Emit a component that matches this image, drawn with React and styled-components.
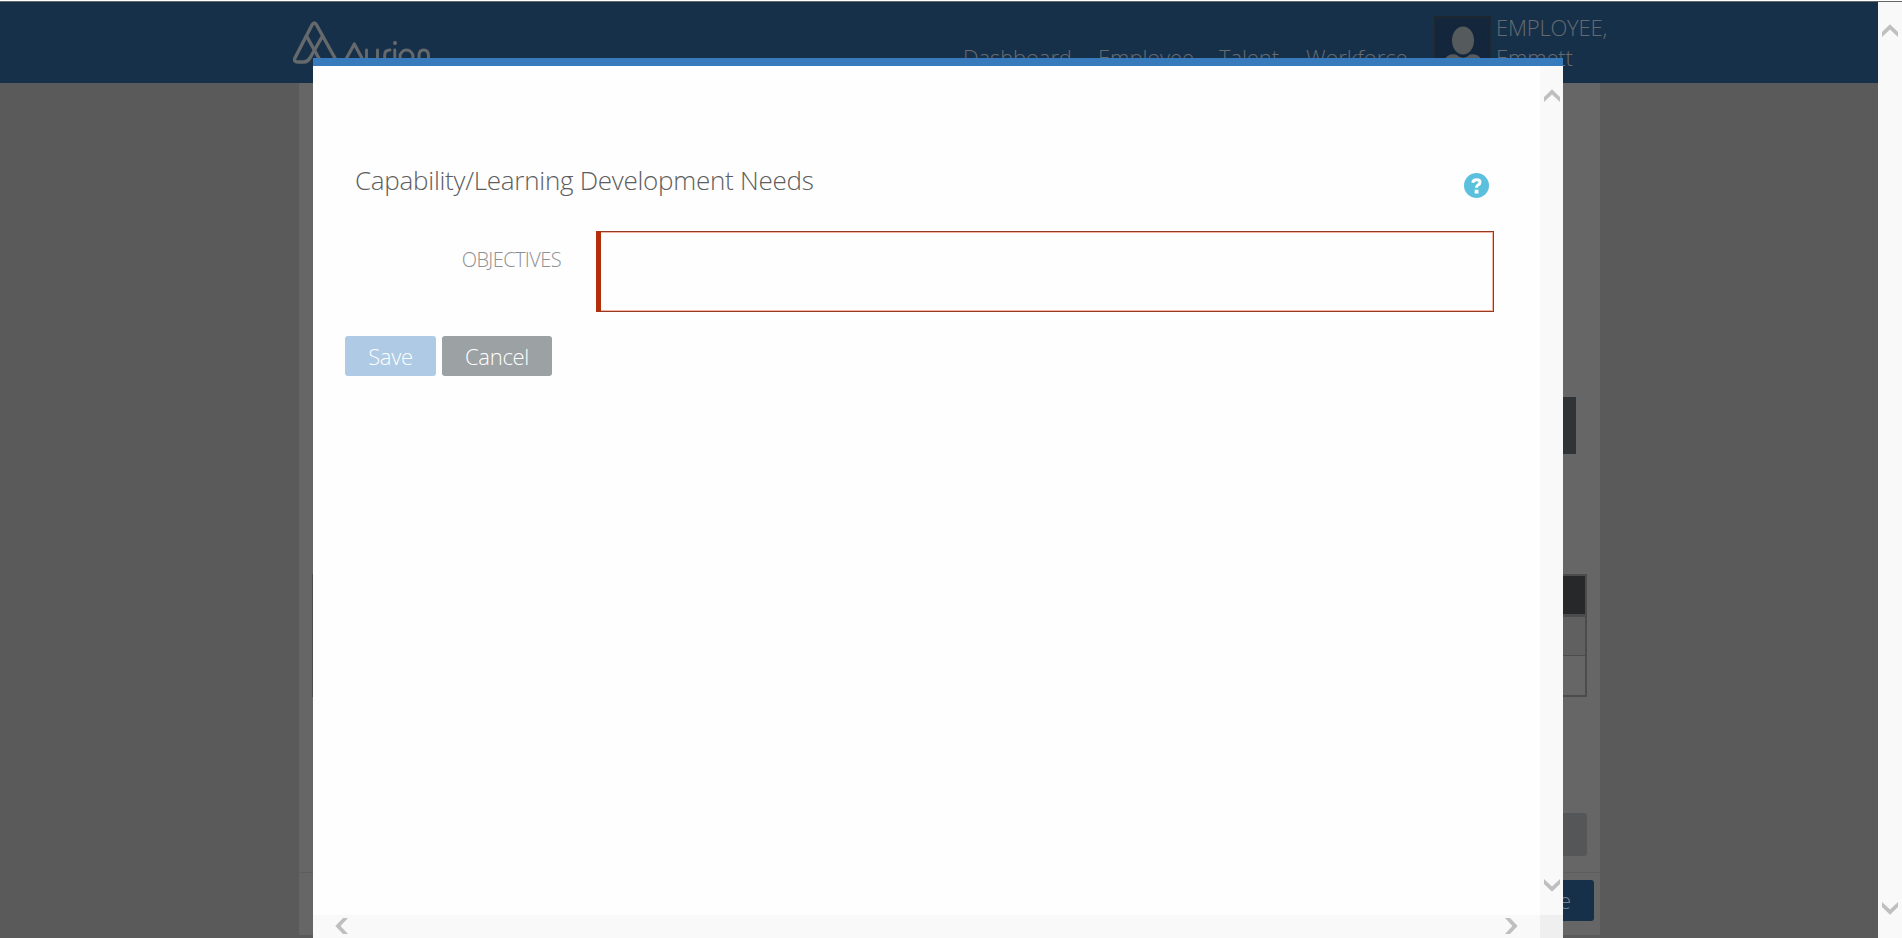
import React from "react";
import styled, { createGlobalStyle } from "styled-components";

const Global = createGlobalStyle`
  * { box-sizing: border-box; }
  html, body { margin: 0; height: 100%; overflow: hidden; }
  body { font-family: "Open Sans", sans-serif; font-weight: 300; background: #fff; }
`;

const Window = styled.div`
  position: relative;
  display: flex;
  width: 1902px;
  height: 938px;
  padding-top: 1px;
  overflow: hidden;
  background: #fff;
`;

const Page = styled.div`
  display: flex;
  flex-direction: column;
  width: 1878px;
  height: 937px;
  overflow: hidden;
  background: #5a5a5a;
`;

const Header = styled.header`
  display: flex;
  align-items: flex-start;
  flex: none;
  height: 82px;
  padding-left: 293px;
  border-top: 1px solid #646668;
  background: #17304a;
  color: #666b70;
`;

const Logo = styled.svg`
  flex: none;
  width: 150px;
  height: 60px;
  margin-top: 14px;
`;

const Nav = styled.nav`
  display: flex;
  gap: 27px;
  margin: 40px 0 0 520px;
`;

const NavItem = styled.a`
  width: ${(p) => p.$width}px;
  font-size: 22px;
  line-height: 30px;
  letter-spacing: -0.1px;
  white-space: nowrap;
`;

const Avatar = styled.div`
  flex: none;
  width: 57px;
  height: 57px;
  margin: 14px 0 0 27px;
  border: 2px solid #1d2730;
  background: #14263b;
  svg { display: block; }
`;

const UserName = styled.div`
  width: 130px;
  margin: 10px 0 0 5px;
  font-size: 22px;
  line-height: 30px;
  letter-spacing: -0.2px;
`;

const Panel = styled.main`
  display: flex;
  flex-direction: column;
  flex: none;
  align-items: flex-end;
  width: 1301px;
  height: 852px;
  margin-left: 299px;
  background: #666;
`;

const SectionBar = styled.div`
  width: 1240px;
  height: 57px;
  margin: 314px 24px 0 0;
  background: #303437;
`;

const Table = styled.div`
  width: 1275px;
  height: 123px;
  margin: 120px 13px 0 0;
  border: 2px solid #4c4c4c;
`;

const TableRow = styled.div`
  height: ${(p) => p.$height}px;
  border-bottom: ${(p) => p.$line}px solid #4c4c4c;
  background: ${(p) => p.$fill};
`;

const GreyButton = styled.div`
  width: 120px;
  height: 43px;
  margin: 116px 13px 0 0;
  border-radius: 3px;
  background: #545658;
`;

const PanelFooter = styled.footer`
  display: flex;
  justify-content: flex-end;
  width: 100%;
  margin-top: 16px;
  padding: 7px 6px 0 0;
  border-top: 1px solid #5d5d5d;
`;

const FooterButton = styled.div`
  height: 41px;
  padding: 0 23px;
  border-radius: 3px;
  background: #17304a;
  color: #7a838c;
  font-size: 22px;
  line-height: 41px;
`;

const PageScroll = styled.div`
  display: flex;
  flex-direction: column;
  justify-content: space-between;
  align-items: center;
  width: 24px;
  padding: 22px 1px 23px 0;
  border-top: 1px solid #646668;
  background: #f9f9f9;
`;

const Modal = styled.section`
  position: absolute;
  left: 313px;
  top: 58px;
  display: grid;
  grid-template-columns: 1227px 23px;
  grid-template-rows: 849px 23px;
  border-top: 8px solid #377bbd;
  background: #fefefe;
`;

const VerticalBar = styled.div`
  display: flex;
  flex-direction: column;
  justify-content: space-between;
  align-items: flex-start;
  padding: 23px 0 23px 4px;
  background: #f9f9f9;
`;

const HorizontalBar = styled.div`
  display: flex;
  justify-content: space-between;
  align-items: flex-start;
  padding: 4px 21px 0;
  background: #f9f9f9;
`;

const Corner = styled.div`
  background: #efefef;
`;

const Form = styled.form`
  display: flex;
  flex-direction: column;
  padding: 95px 46px 0 32px;
`;

const TitleRow = styled.div`
  display: flex;
  justify-content: space-between;
  height: 70px;
  padding: 0 5px 0 10px;
`;

const Title = styled.h1`
  margin: 0;
  font-size: 26px;
  font-weight: 300;
  line-height: 38px;
  letter-spacing: -0.27px;
  color: #5d5d5d;
  white-space: nowrap;
`;

const Help = styled.svg`
  width: 25px;
  height: 25px;
  margin-top: 11.5px;
`;

const FieldRow = styled.div`
  display: flex;
  justify-content: space-between;
`;

const Label = styled.label`
  width: 216px;
  padding-top: 15px;
  font-size: 20px;
  line-height: 27px;
  letter-spacing: -0.6px;
  text-align: right;
  white-space: nowrap;
  color: #8e9194;
`;

const Field = styled.div`
  width: 898px;
  height: 81px;
  border: 1px solid #953a22;
  border-left: 5px solid #b32f0c;
  box-shadow: inset -1px 0 #f5b49f, inset 0 1px #f5b49f, inset 0 -1px #f5b49f;
`;

const Actions = styled.div`
  display: flex;
  gap: 6px;
  margin-top: 24px;
`;

const Button = styled.button`
  width: ${(p) => p.$width}px;
  height: 40px;
  padding: 1px 0 0;
  border: 0;
  border-radius: 3px;
  background: ${(p) => p.$fill};
  color: #fff;
  font: 300 22px/39px "Open Sans", sans-serif;
  letter-spacing: -0.3px;
`;

const turns = { up: 0, right: 90, down: 180, left: 270 };

const ArrowSvg = styled.svg`
  display: block;
  flex: none;
  width: 16px;
  height: 14px;
  transform: rotate(${(p) => turns[p.$dir]}deg);
`;

const Arrow = ({ dir }) => (
  <ArrowSvg viewBox="0 0 16 14" $dir={dir}>
    <path d="M0 8 8 0.3 16 8V13L8 5.6 0 13Z" fill="#bfbfbf" />
  </ArrowSvg>
);

const AurionLogo = () => (
  <Logo viewBox="0 0 150 60" fill="none" stroke="#66696c" strokeWidth="3.4" strokeLinecap="round" strokeLinejoin="round">
    <path d="M29.500 20 17 42Q14.500 46 11 46H5Q0 46 2.200 41.500L19 9Q21.300 5 23.600 9L43 44" />
    <path d="M13.500 20 28 46" />
    <path d="M52 45 61.300 28 70.500 45" strokeWidth="3.2" />
    <path d="M73.500 34V43Q73.500 49 79 49T84.500 43V34M91.700 48V39Q91.700 34 97 34M101.800 34V48M126 48V40Q126 34 130.700 34T135.500 40V48" strokeWidth="2.9" />
    <circle cx="113.500" cy="40.500" r="6.500" strokeWidth="2.9" />
    <circle cx="102" cy="27" r="2" fill="#66696c" stroke="none" />
  </Logo>
);

export default function App() {
  return (
    <>
      <Global />
      <Window>
        <Page>
          <Header>
            <AurionLogo />
            <Nav>
              <NavItem $width={108}>Dashboard</NavItem>
              <NavItem $width={94}>Employee</NavItem>
              <NavItem $width={60}>Talent</NavItem>
              <NavItem $width={101}>Workforce</NavItem>
            </Nav>
            <Avatar>
              <svg width="53" height="53" viewBox="0 0 53 53" fill="#555a5d">
                <ellipse cx="27" cy="22.500" rx="11" ry="14" />
                <path d="M8 42Q12 35 20 36.500Q27 43 34 36.500Q42 35 46 42V53H8Z" />
              </svg>
            </Avatar>
            <UserName>EMPLOYEE, Emmett</UserName>
          </Header>
          <Panel>
            <SectionBar />
            <Table>
              <TableRow $height={41} $line={3} $fill="#27282a" />
              <TableRow $height={39} $line={1} $fill="#606060" />
              <TableRow $height={39} $line={0} $fill="#666" />
            </Table>
            <GreyButton />
            <PanelFooter>
              <FooterButton>Save</FooterButton>
            </PanelFooter>
          </Panel>
        </Page>
        <PageScroll>
          <Arrow dir="up" />
          <Arrow dir="down" />
        </PageScroll>
        <Modal>
          <Form>
            <TitleRow>
              <Title>Capability/Learning Development Needs</Title>
              <Help viewBox="0 0 25 25">
                <circle cx="12.500" cy="12.500" r="12.500" fill="#5bc0de" />
                <path d="M8.800 9.700Q9.200 6.800 12.700 6.800Q16 6.800 16 9.500Q16 11 14 12Q12.500 12.800 12.500 14.800" fill="none" stroke="#fff" strokeWidth="3" />
                <rect x="10.700" y="16.700" width="3.800" height="3.800" fill="#fff" />
              </Help>
            </TitleRow>
            <FieldRow>
              <Label>OBJECTIVES</Label>
              <Field />
            </FieldRow>
            <Actions>
              <Button type="button" $width={91} $fill="#aecae4">Save</Button>
              <Button type="button" $width={110} $fill="#9ca1a4">Cancel</Button>
            </Actions>
          </Form>
          <VerticalBar>
            <Arrow dir="up" />
            <Arrow dir="down" />
          </VerticalBar>
          <HorizontalBar>
            <Arrow dir="left" />
            <Arrow dir="right" />
          </HorizontalBar>
          <Corner />
        </Modal>
      </Window>
    </>
  );
}
